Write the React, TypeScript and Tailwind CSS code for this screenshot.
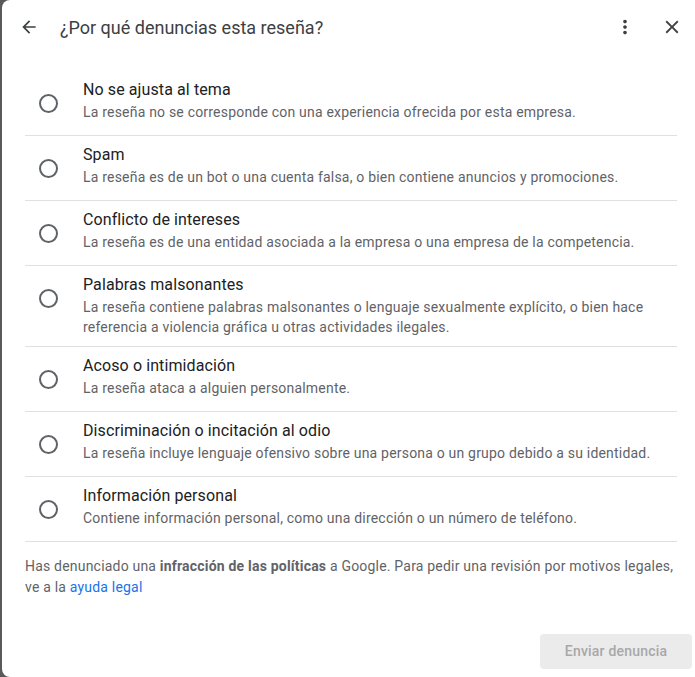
import type { ReactNode } from "react";

type Reason = {
  title: string;
  description: string;
};

const reasons: Reason[] = [
  {
    title: "No se ajusta al tema",
    description: "La reseña no se corresponde con una experiencia ofrecida por esta empresa.",
  },
  {
    title: "Spam",
    description: "La reseña es de un bot o una cuenta falsa, o bien contiene anuncios y promociones.",
  },
  {
    title: "Conflicto de intereses",
    description: "La reseña es de una entidad asociada a la empresa o una empresa de la competencia.",
  },
  {
    title: "Palabras malsonantes",
    description:
      "La reseña contiene palabras malsonantes o lenguaje sexualmente explícito, o bien hace referencia a violencia gráfica u otras actividades ilegales.",
  },
  {
    title: "Acoso o intimidación",
    description: "La reseña ataca a alguien personalmente.",
  },
  {
    title: "Discriminación o incitación al odio",
    description: "La reseña incluye lenguaje ofensivo sobre una persona o un grupo debido a su identidad.",
  },
  {
    title: "Información personal",
    description: "Contiene información personal, como una dirección o un número de teléfono.",
  },
];

function IconButton({ children }: { children: ReactNode }) {
  return (
    <button type="button" className="flex h-10 w-10 items-center justify-center rounded-full text-[#3c4043]">
      {children}
    </button>
  );
}

function ReasonRow({ reason }: { reason: Reason }) {
  return (
    <label className="flex min-h-[65px] items-start border-b border-[#e0e0e0] pt-[7px] pb-[9px]">
      <span className="flex w-[58px] shrink-0 pl-[14px] pt-[16px]">
        <span className="block h-[19px] w-[19px] rounded-full border-2 border-[#5f6368]" />
      </span>
      <span className="flex flex-col">
        <span className="text-[16px] leading-[24px] tracking-[0.1px] text-[#202124]">{reason.title}</span>
        <span className="text-[14px] leading-[20px] tracking-[0.2px] text-[#5f6368]">{reason.description}</span>
      </span>
    </label>
  );
}

export default function App() {
  return (
    <div className="flex h-[677px] w-[695px] overflow-hidden bg-[#5a5a5a] font-['Roboto',sans-serif]">
      <div className="ml-[2px] flex flex-1 flex-col rounded-l-[8px] bg-white">
        <header className="flex h-[54px] items-center pl-[7px] pr-[3px]">
          <IconButton>
            <svg width="20" height="20" viewBox="0 0 24 24" fill="currentColor">
              <path d="M20 11H7.83l5.59-5.59L12 4l-8 8 8 8 1.41-1.41L7.83 13H20v-2z" />
            </svg>
          </IconButton>
          <h1 className="ml-[11px] flex-1 text-[18px] text-[#3c4043]">¿Por qué denuncias esta reseña?</h1>
          <IconButton>
            <svg width="22" height="22" viewBox="0 0 24 24" fill="currentColor">
              <path d="M12 8c1.1 0 2-.9 2-2s-.9-2-2-2-2 .9-2 2 .9 2 2 2zm0 2c-1.1 0-2 .9-2 2s.9 2 2 2 2-.9 2-2-.9-2-2-2zm0 6c-1.1 0-2 .9-2 2s.9 2 2 2 2-.9 2-2-.9-2-2-2z" />
            </svg>
          </IconButton>
          <span className="w-[7px]" />
          <IconButton>
            <svg width="22" height="22" viewBox="0 0 24 24" fill="currentColor">
              <path d="M19 6.41 17.59 5 12 10.59 6.41 5 5 6.41 10.59 12 5 17.59 6.41 19 12 13.41 17.59 19 19 17.59 13.41 12z" />
            </svg>
          </IconButton>
        </header>

        <div className="ml-[23px] mr-[18px] mt-[17px] flex flex-col">
          {reasons.map((reason) => (
            <ReasonRow key={reason.title} reason={reason} />
          ))}
        </div>

        <p className="ml-[23px] mr-[18px] mt-[14px] text-[14px] leading-[21px] tracking-[0.2px] text-[#5f6368]">
          Has denunciado una <b className="font-bold">infracción de las políticas</b> a Google. Para pedir una
          revisión por motivos legales, ve a la <a className="text-[#1a73e8]">ayuda legal</a>
        </p>

        <div className="mt-auto mb-[8px] flex justify-end pr-[3px]">
          <button
            type="button"
            className="h-[35px] w-[152px] rounded-[4px] bg-[#ebebeb] text-[14px] font-medium tracking-[0.2px] text-[#a8a8a8]"
          >
            Enviar denuncia
          </button>
        </div>
      </div>
    </div>
  );
}
